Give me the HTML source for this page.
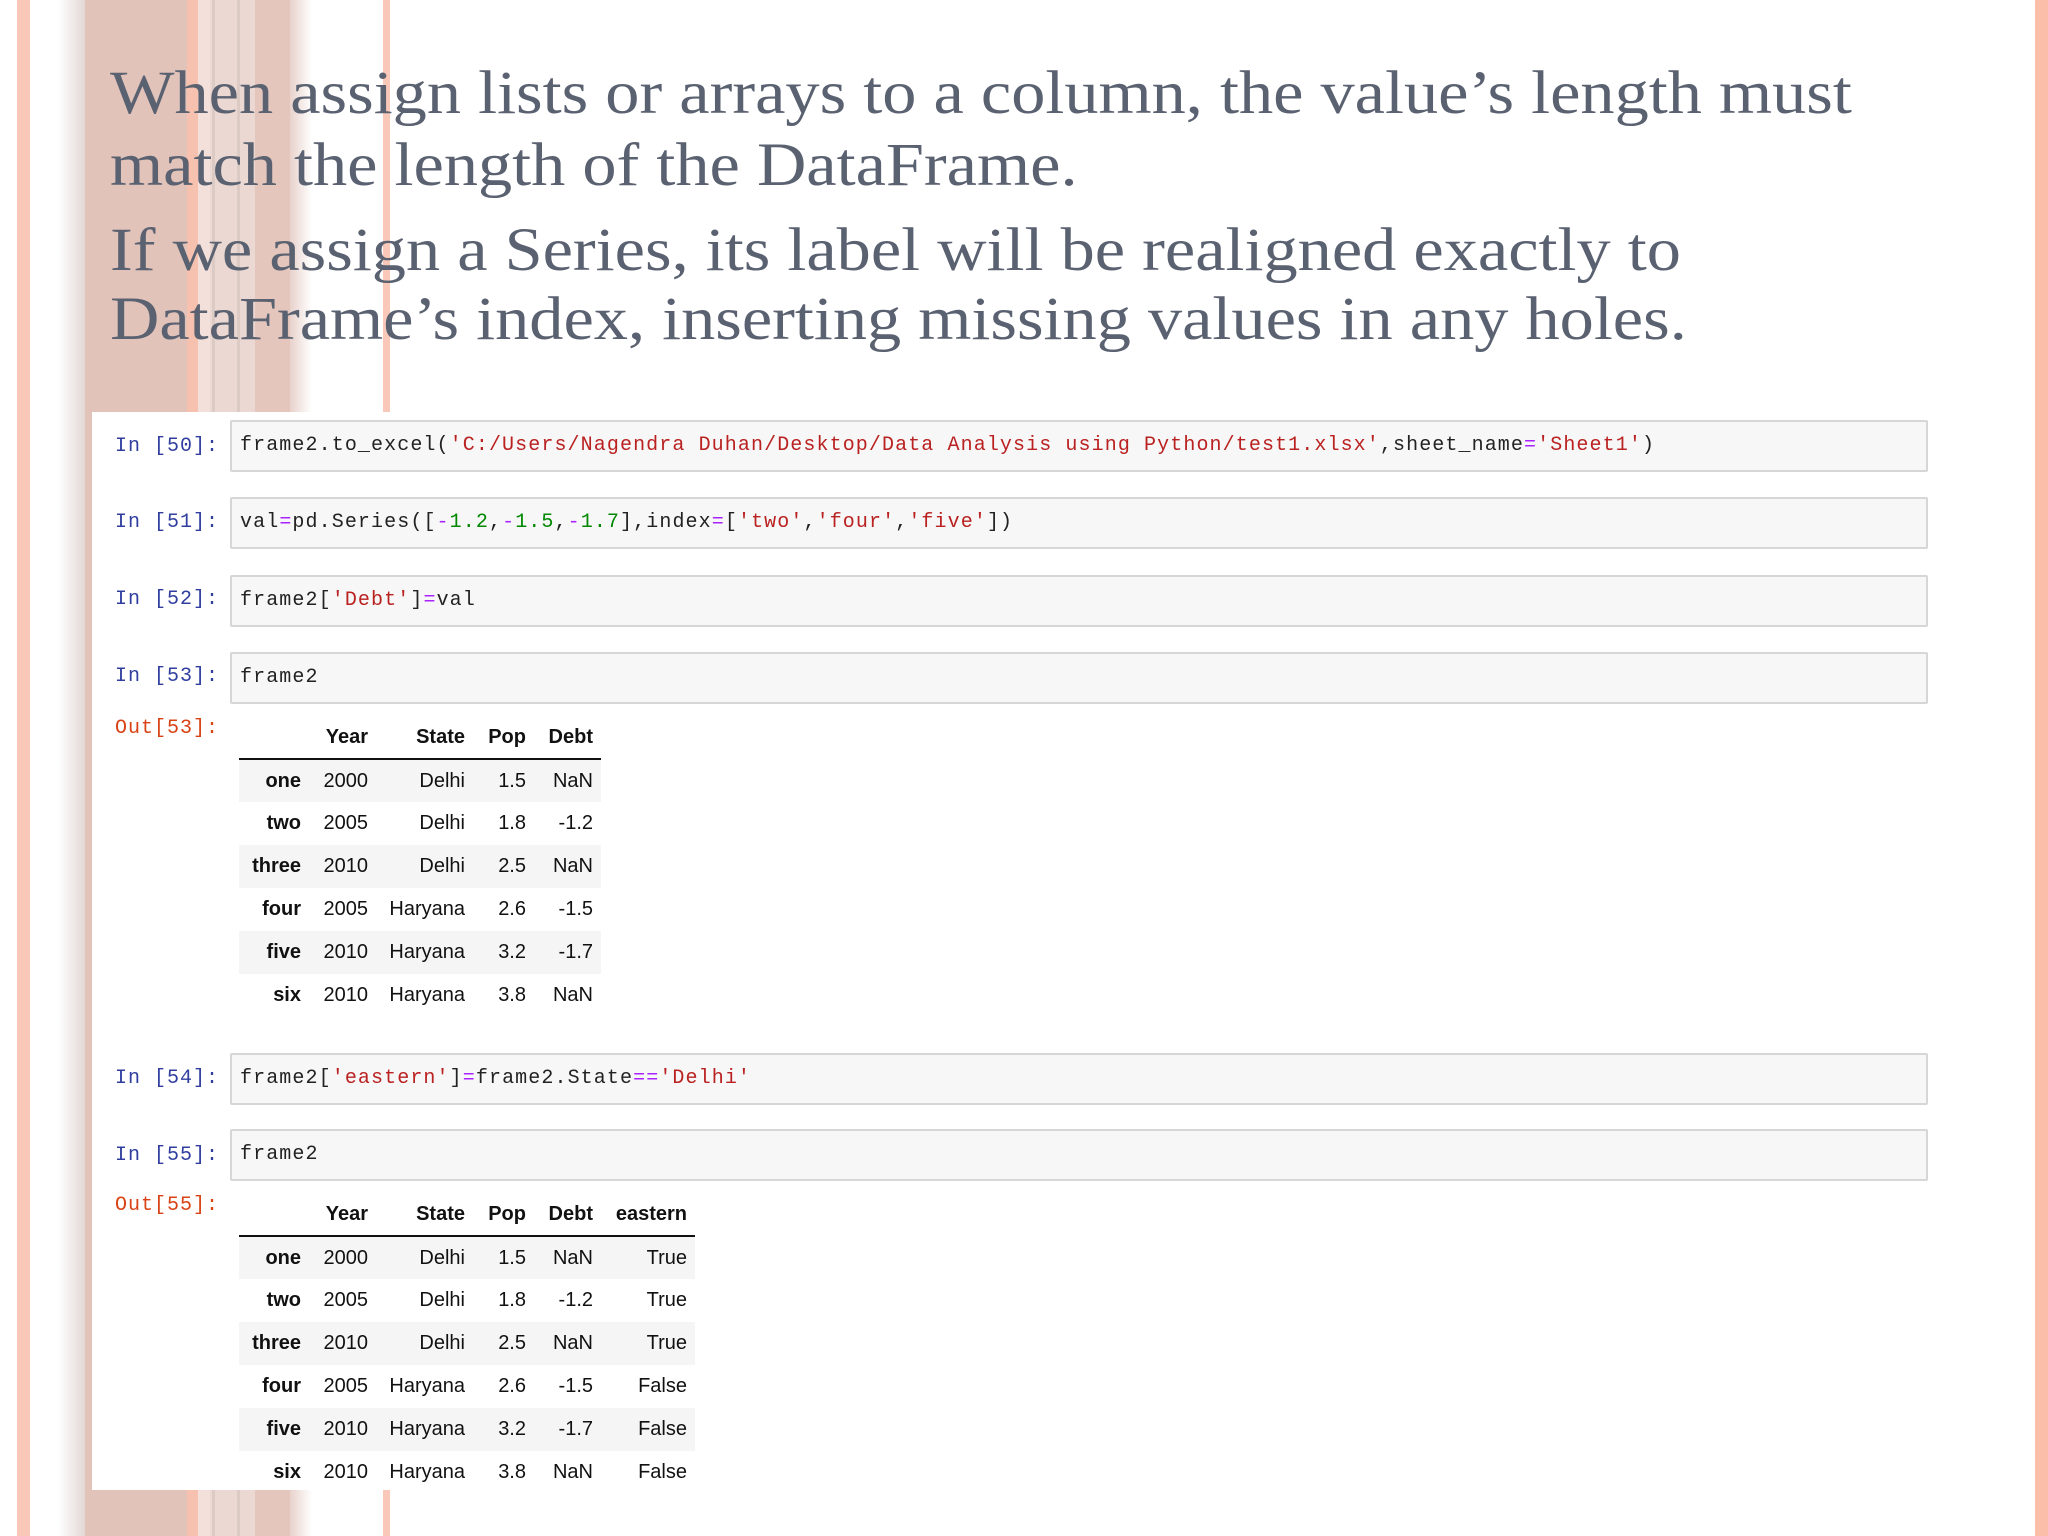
<!DOCTYPE html>
<html><head><meta charset="utf-8"><style>
*{margin:0;padding:0;box-sizing:border-box}
body{width:2048px;height:1536px;position:relative;background:#fff;overflow:hidden;font-family:"Liberation Sans",sans-serif}
.s{position:absolute;top:0;height:1536px}
.t{position:absolute;left:110px;font-family:"Liberation Serif",serif;font-size:61px;color:#5a6170;white-space:nowrap;line-height:70px;transform:scaleX(1.12);transform-origin:0 0}
#panel{position:absolute;left:92px;top:412px;width:1850px;height:1078px;background:#fff}
.p{position:absolute;left:115px;font-family:"Liberation Mono",monospace;font-size:20px;letter-spacing:1px;color:#303f9f;line-height:26px}
.o{color:#d84315}
.c{position:absolute;left:230px;width:1698px;height:52px;background:#f7f7f7;border:2px solid #d6d6d6;border-radius:2px;font-family:"Liberation Mono",monospace;font-size:20px;letter-spacing:1.1px;color:#222;padding-left:8px;line-height:48px;white-space:nowrap}
.r{color:#ba2121}.g{color:#080}.m{color:#aa22ff}
table{position:absolute;left:239px;border-collapse:collapse;table-layout:fixed;font-family:"Liberation Sans",sans-serif;font-size:20px;color:#111}
th,td{text-align:right;height:43px;padding:0 8px 0 0;white-space:nowrap}
thead th{border-bottom:2px solid #111;height:42px}
tbody th{font-weight:bold}
tbody tr:nth-child(odd){background:#f5f5f5}
</style></head><body>
<div class="s" style="left:17px;width:13px;background:#f9c8b8"></div>
<div class="s" style="left:58px;width:32px;background:linear-gradient(90deg,#fff,#ddd0cc)"></div>
<div class="s" style="left:85px;width:102px;background:#e2c3ba"></div>
<div class="s" style="left:187px;width:11px;background:#f6c1ae"></div>
<div class="s" style="left:198px;width:12px;background:#f3e0db"></div>
<div class="s" style="left:210px;width:45px;background:#ecd8d2"></div>
<div class="s" style="left:212px;width:3px;background:#dccac4"></div>
<div class="s" style="left:237px;width:3px;background:#dccac4"></div>
<div class="s" style="left:255px;width:35px;background:#e4c6bd"></div>
<div class="s" style="left:290px;width:22px;background:linear-gradient(90deg,#e8d2cc,#fff)"></div>
<div class="s" style="left:383px;width:7px;background:#f9c8b8"></div>
<div class="s" style="left:2035px;width:13px;background:#fbbea8"></div>

<div class="t" style="top:59px">When assign lists or arrays to a column, the value’s length must</div>
<div class="t" style="top:131px">match the length of the DataFrame.</div>
<div class="t" style="top:216px">If we assign a Series, its label will be realigned exactly to</div>
<div class="t" style="top:285px">DataFrame’s index, inserting missing values in any holes.</div>

<div id="panel"></div>
<div class="p" style="top:434px">In [50]:</div>
<div class="c" style="top:420px">frame2.to_excel(<span class="r">'C:/Users/Nagendra Duhan/Desktop/Data Analysis using Python/test1.xlsx'</span>,sheet_name<span class="m">=</span><span class="r">'Sheet1'</span>)</div>
<div class="p" style="top:510px">In [51]:</div>
<div class="c" style="top:497px">val<span class="m">=</span>pd.Series([<span class="m">-</span><span class="g">1.2</span>,<span class="m">-</span><span class="g">1.5</span>,<span class="m">-</span><span class="g">1.7</span>],index<span class="m">=</span>[<span class="r">'two'</span>,<span class="r">'four'</span>,<span class="r">'five'</span>])</div>
<div class="p" style="top:587px">In [52]:</div>
<div class="c" style="top:575px">frame2[<span class="r">'Debt'</span>]<span class="m">=</span>val</div>
<div class="p" style="top:664px">In [53]:</div>
<div class="c" style="top:652px">frame2</div>
<div class="p o" style="top:716px">Out[53]:</div>
<table style="top:717px;width:362px"><colgroup><col style="width:70px"><col style="width:67px"><col style="width:97px"><col style="width:61px"><col style="width:67px"></colgroup><thead><tr><th></th><th>Year</th><th>State</th><th>Pop</th><th>Debt</th></tr></thead><tbody>
<tr><th>one</th><td>2000</td><td>Delhi</td><td>1.5</td><td>NaN</td></tr>
<tr><th>two</th><td>2005</td><td>Delhi</td><td>1.8</td><td>-1.2</td></tr>
<tr><th>three</th><td>2010</td><td>Delhi</td><td>2.5</td><td>NaN</td></tr>
<tr><th>four</th><td>2005</td><td>Haryana</td><td>2.6</td><td>-1.5</td></tr>
<tr><th>five</th><td>2010</td><td>Haryana</td><td>3.2</td><td>-1.7</td></tr>
<tr><th>six</th><td>2010</td><td>Haryana</td><td>3.8</td><td>NaN</td></tr></tbody></table>
<div class="p" style="top:1066px">In [54]:</div>
<div class="c" style="top:1053px">frame2[<span class="r">'eastern'</span>]<span class="m">=</span>frame2.State<span class="m">==</span><span class="r">'Delhi'</span></div>
<div class="p" style="top:1143px">In [55]:</div>
<div class="c" style="top:1129px">frame2</div>
<div class="p o" style="top:1193px">Out[55]:</div>
<table style="top:1194px;width:456px"><colgroup><col style="width:70px"><col style="width:67px"><col style="width:97px"><col style="width:61px"><col style="width:67px"><col style="width:94px"></colgroup><thead><tr><th></th><th>Year</th><th>State</th><th>Pop</th><th>Debt</th><th>eastern</th></tr></thead><tbody>
<tr><th>one</th><td>2000</td><td>Delhi</td><td>1.5</td><td>NaN</td><td>True</td></tr>
<tr><th>two</th><td>2005</td><td>Delhi</td><td>1.8</td><td>-1.2</td><td>True</td></tr>
<tr><th>three</th><td>2010</td><td>Delhi</td><td>2.5</td><td>NaN</td><td>True</td></tr>
<tr><th>four</th><td>2005</td><td>Haryana</td><td>2.6</td><td>-1.5</td><td>False</td></tr>
<tr><th>five</th><td>2010</td><td>Haryana</td><td>3.2</td><td>-1.7</td><td>False</td></tr>
<tr><th>six</th><td>2010</td><td>Haryana</td><td>3.8</td><td>NaN</td><td>False</td></tr></tbody></table>
</body></html>
